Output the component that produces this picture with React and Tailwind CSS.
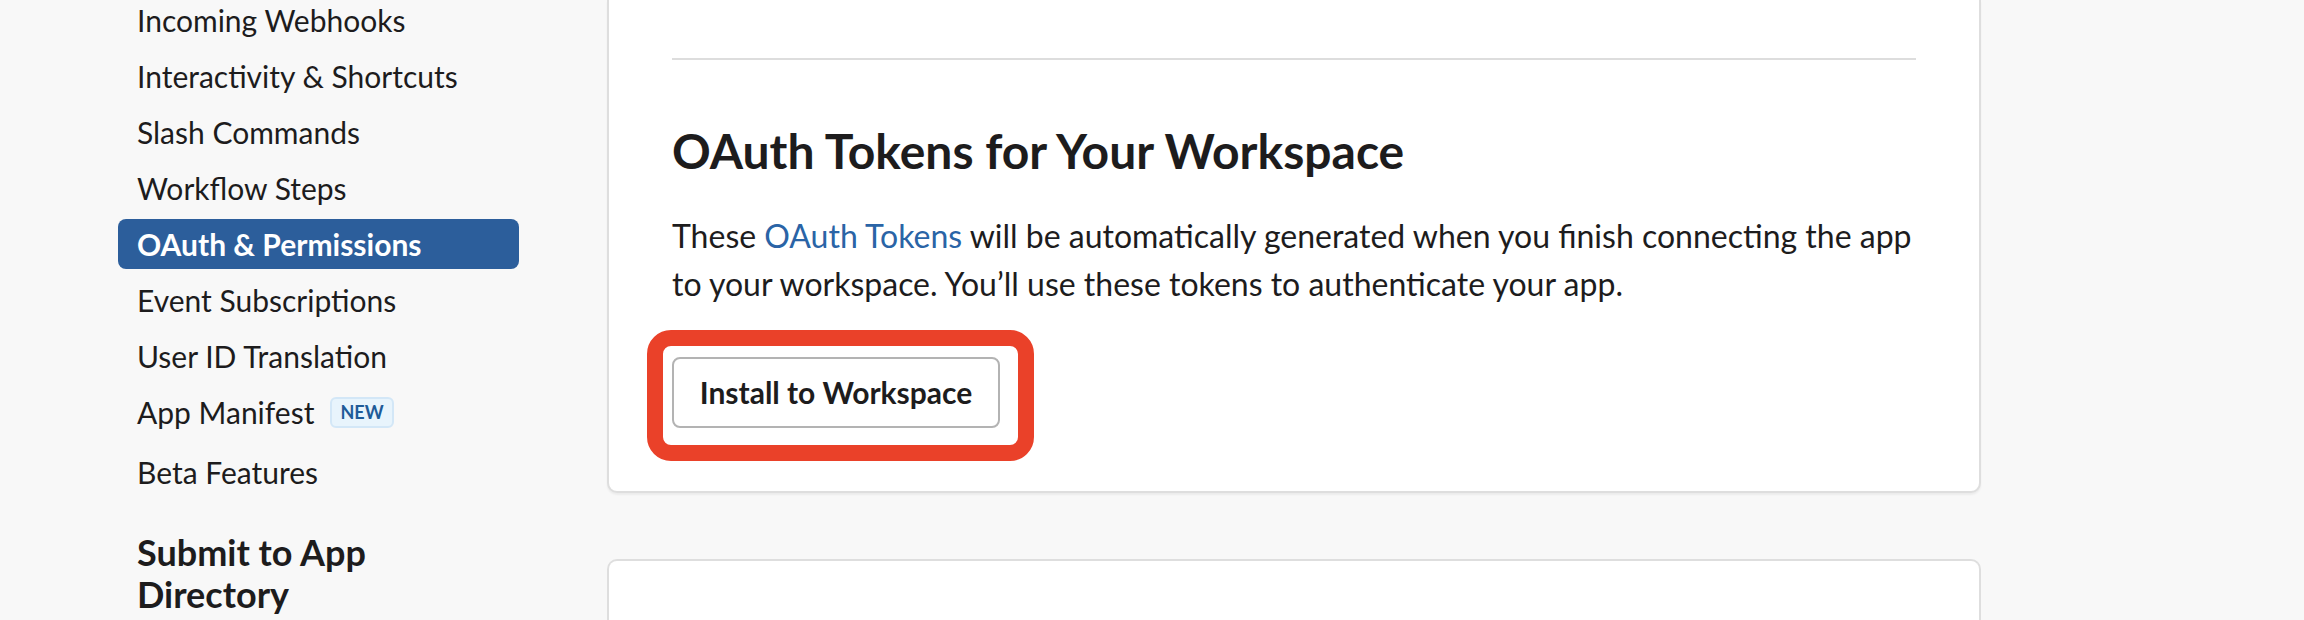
import React from "react";

const items = [
  "Incoming Webhooks",
  "Interactivity & Shortcuts",
  "Slash Commands",
  "Workflow Steps",
  "OAuth & Permissions",
  "Event Subscriptions",
  "User ID Translation",
];

export default function App() {
  return (
    <div
      className="w-[2304px] h-[620px] overflow-hidden bg-[#f8f8f8] flex text-[#1d1c1d]"
      style={{ fontFamily: "Lato, 'Open Sans', sans-serif" }}
    >
      <aside className="w-[607px] shrink-0 pl-[118px]">
        <ul className="w-[401px] -mt-[5px] flex flex-col gap-[6px]">
          {items.map((t) => {
            const active = t === "OAuth & Permissions";
            return (
              <li
                key={t}
                className={
                  "h-[50px] flex items-center px-[19px] rounded-[8px] text-[30px] " +
                  (active ? "bg-[#2c5e9b] text-white font-bold" : "")
                }
              >
                {t}
              </li>
            );
          })}
          <li className="h-[50px] flex items-center px-[19px] text-[30px]">
            App Manifest
            <span className="ml-[16px] h-[31px] px-[8px] flex items-center rounded-[6px] border-2 border-[#d3e7f7] bg-[#e8f4fc] text-[#1e5b98] text-[18px] font-bold leading-none">
              NEW
            </span>
          </li>
          <li className="h-[50px] mt-[4px] flex items-center px-[19px] text-[30px]">
            Beta Features
          </li>
        </ul>
        <h3 className="mt-[34px] pl-[19px] text-[36px] leading-[42px] font-bold">
          Submit to App
          <br />
          Directory
        </h3>
      </aside>

      <main className="w-[1374px] shrink-0 flex flex-col">
        <section className="bg-white border-2 border-t-0 border-[#dedede] rounded-b-[10px] shadow-[0_2px_2px_rgba(0,0,0,0.05)] px-[63px] pt-[58px] pb-[63px]">
          <div className="h-[2px] bg-[#dddddd]" />
          <h2 className="mt-[62px] text-[48px] leading-[58px] font-bold">
            OAuth Tokens for Your Workspace
          </h2>
          <p className="mt-[32px] text-[32px] leading-[48px]">
            These <span className="text-[#2a64a6]">OAuth Tokens</span> will be
            automatically generated when you finish connecting the app
            <br />
            to your workspace. You’ll use these tokens to authenticate your app.
          </p>
          <div className="relative mt-[49px] w-[328px]">
            <button className="w-[328px] h-[71px] border-2 border-[#b3b3b3] rounded-[8px] bg-white text-[30px] font-bold text-[#1d1c1d]">
              Install to Workspace
            </button>
            <div className="absolute left-[-25px] top-[-27px] w-[387px] h-[131px] border-[16px] border-[#ea4129] rounded-[24px] pointer-events-none" />
          </div>
        </section>
        <section className="mt-[66px] flex-1 bg-white border-2 border-b-0 border-[#dedede] rounded-t-[10px]" />
      </main>

      <div className="flex-1" />
    </div>
  );
}
